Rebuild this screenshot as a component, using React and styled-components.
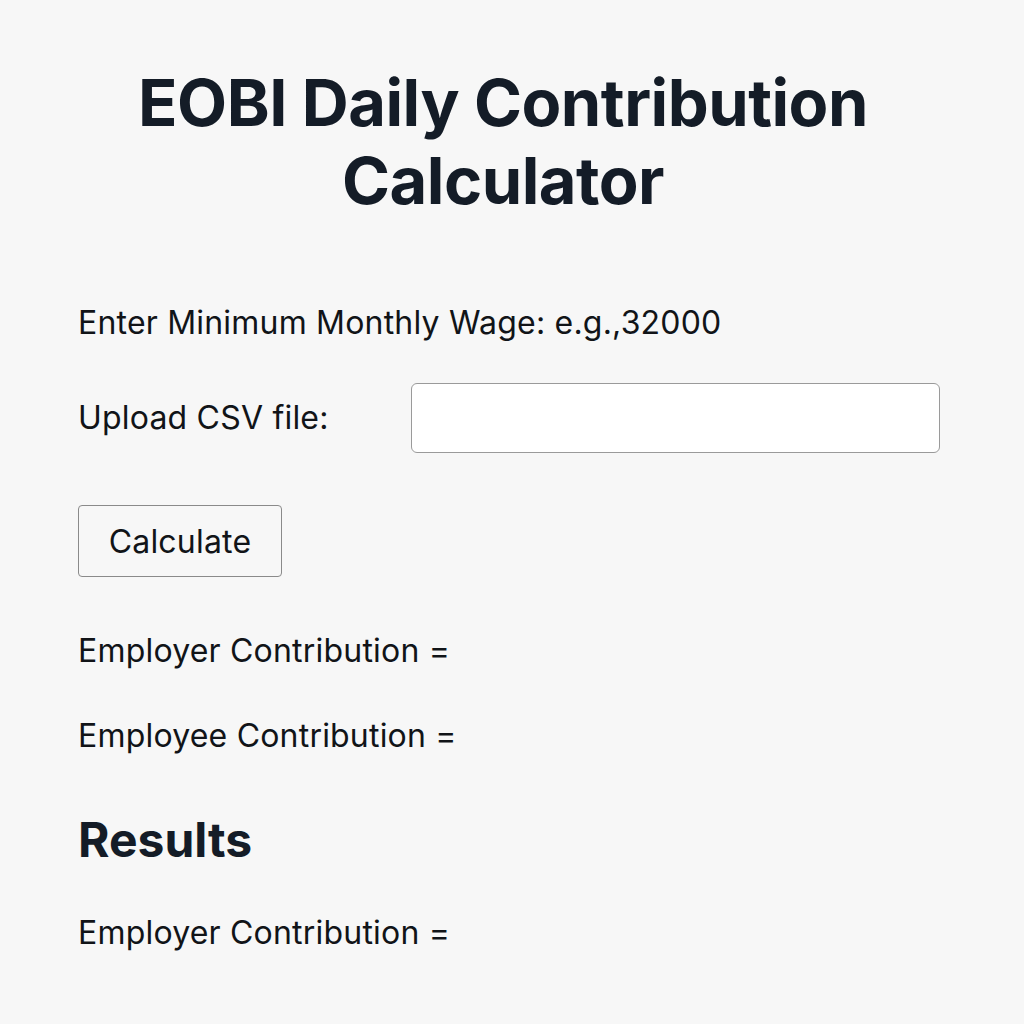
import React from 'react'
import styled, { createGlobalStyle } from 'styled-components'

const GlobalStyle = createGlobalStyle`
  body {
    margin: 0;
    background: #f7f7f7;
    font-family: Inter, 'Noto Sans', sans-serif;
    color: #111418;
  }
`

const Page = styled.div`
  min-height: 1024px;
  padding: 64px 84px 0 78px;
  box-sizing: border-box;
`

const Title = styled.h1`
  margin: 0 12px 0 0;
  text-align: center;
  font-size: 65px;
  line-height: 78px;
  font-weight: 700;
  letter-spacing: -0.5px;
  color: #141c27;
`

const Form = styled.div`
  margin-top: 83px;
  display: flex;
  flex-direction: column;
`

const Text = styled.p`
  margin: ${props => props.mt || 0}px 0 0;
  font-size: 32px;
  line-height: 40px;
  font-weight: 400;
  letter-spacing: 0.2px;
`

const FileRow = styled.div`
  margin-top: 40px;
  display: grid;
  grid-template-columns: 333px 1fr;
  align-items: center;
`

const FileInput = styled.div`
  height: 70px;
  background: #fff;
  border: 1.5px solid #9a9a9a;
  border-radius: 6px;
  box-sizing: border-box;
`

const Button = styled.button`
  margin-top: 52px;
  align-self: flex-start;
  width: 204px;
  height: 72px;
  background: #f7f7f7;
  border: 1.5px solid #8a8a8a;
  border-radius: 4px;
  font-family: inherit;
  font-size: 32px;
  letter-spacing: 0.2px;
  color: #111418;
`

const Heading = styled.h2`
  margin: 56px 0 0;
  font-size: 48px;
  line-height: 56px;
  font-weight: 700;
  color: #141c27;
`

const App = () => {
  return (
    <>
      <GlobalStyle />
      <Page>
        <Title>
          EOBI Daily Contribution
          <br />
          Calculator
        </Title>
        <Form>
          <Text>Enter Minimum Monthly Wage: e.g.,32000</Text>
          <FileRow>
            <Text>Upload CSV file:</Text>
            <FileInput />
          </FileRow>
          <Button>Calculate</Button>
          <Text mt={54}>Employer Contribution =</Text>
          <Text mt={45}>Employee Contribution =</Text>
          <Heading>Results</Heading>
          <Text mt={45}>Employer Contribution =</Text>
        </Form>
      </Page>
    </>
  )
}

export default App
